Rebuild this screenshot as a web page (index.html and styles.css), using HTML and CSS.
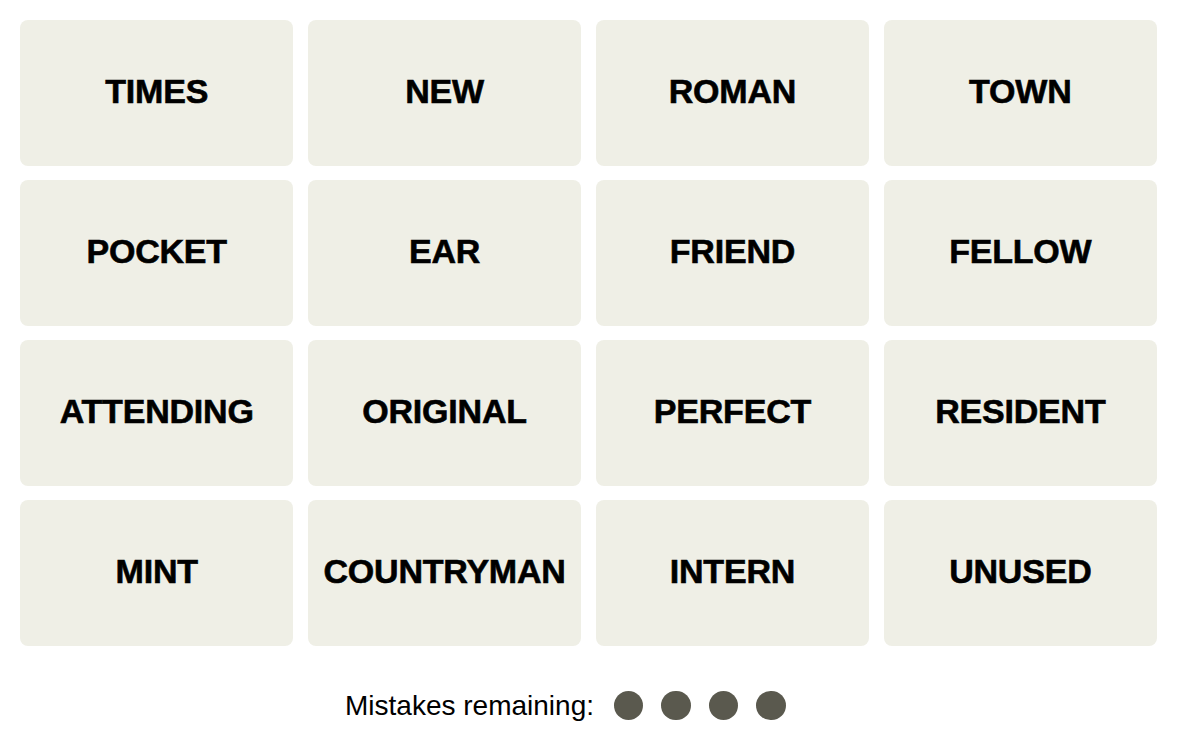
FILE: index.html
```html
<!DOCTYPE html>
<html lang="en">
<head>
<meta charset="utf-8">
<title>Connections</title>
<link rel="stylesheet" href="styles.css">
</head>
<body>
<main class="game">
  <div class="board">
    <div class="tile">TIMES</div>
    <div class="tile">NEW</div>
    <div class="tile">ROMAN</div>
    <div class="tile">TOWN</div>
    <div class="tile">POCKET</div>
    <div class="tile">EAR</div>
    <div class="tile">FRIEND</div>
    <div class="tile">FELLOW</div>
    <div class="tile">ATTENDING</div>
    <div class="tile">ORIGINAL</div>
    <div class="tile">PERFECT</div>
    <div class="tile">RESIDENT</div>
    <div class="tile">MINT</div>
    <div class="tile">COUNTRYMAN</div>
    <div class="tile">INTERN</div>
    <div class="tile">UNUSED</div>
  </div>
  <div class="mistakes">
    <span class="mistakes-label">Mistakes remaining:</span>
    <span class="dots">
      <span class="dot"></span>
      <span class="dot"></span>
      <span class="dot"></span>
      <span class="dot"></span>
    </span>
  </div>
</main>
</body>
</html>
```

FILE: styles.css
```css
html, body {
  margin: 0;
  padding: 0;
  background: #ffffff;
}

body {
  font-family: "Liberation Sans", Arial, sans-serif;
  color: #000;
}

.game {
  padding: 20px 0 0 20px;
  width: 1137px;
}

.board {
  display: grid;
  grid-template-columns: repeat(4, 1fr);
  grid-template-rows: repeat(4, 145.5px);
  gap: 14.5px;
}

.tile {
  background: #efefe6;
  border-radius: 8px;
  display: flex;
  align-items: center;
  justify-content: center;
  font-weight: 700;
  font-size: 34px;
  padding-bottom: 3px;
  box-sizing: border-box;
  letter-spacing: -0.2px;
  -webkit-text-stroke: 0.6px #000;
}

.mistakes {
  margin-top: 45px;
  height: 30px;
  display: flex;
  align-items: center;
  justify-content: center;
  padding-right: 46px;
}

.mistakes-label {
  font-size: 28px;
  margin-right: 20px;
}

.dots {
  display: flex;
  gap: 18px;
}

.dot {
  width: 29.5px;
  height: 29.5px;
  border-radius: 50%;
  background: #5a594e;
}
```
